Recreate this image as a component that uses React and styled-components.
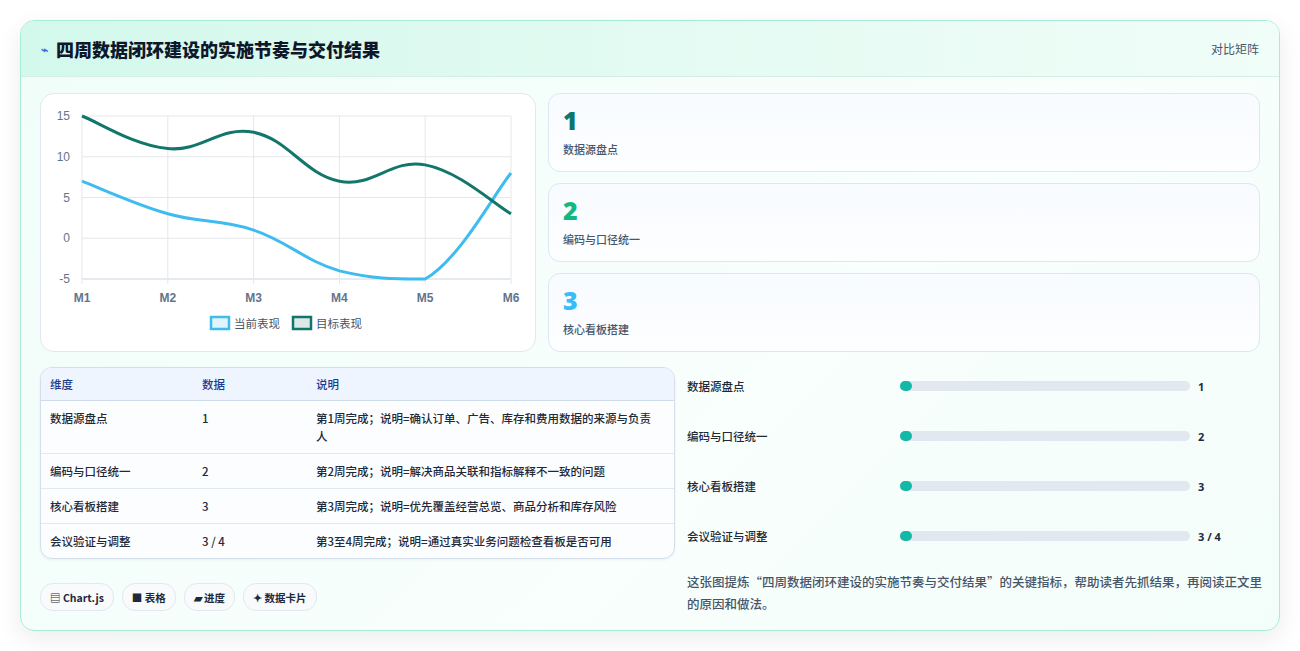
import React from "react";
import styled, { createGlobalStyle } from "styled-components";

const Global = createGlobalStyle`
  html,body{margin:0;padding:0;background:#fff;}
  body{font-family:"Noto Sans CJK SC","Noto Sans",sans-serif;}
`;

const Page = styled.div`
  padding:20px;
  height:651px;
  box-sizing:border-box;
`;
const Card = styled.div`
  height:611px;
  box-sizing:border-box;
  border:1px solid #a7ecd9;
  border-radius:14px;
  background:linear-gradient(135deg,#f0fdf8 0%,#f8fffd 60%,#f3fdf9 100%);
  box-shadow:0 8px 24px rgba(15,23,42,0.08);
  overflow:hidden;
  display:flex;
  flex-direction:column;
`;
const Header = styled.div`
  height:55px;
  flex:none;
  display:flex;
  align-items:center;
  justify-content:space-between;
  padding:0 20px;
  background:linear-gradient(90deg,#d3f8ec,#e6fbf3 60%,#f0fdf8);
  border-bottom:1px solid #d4eee8;
`;
const Title = styled.div`
  display:flex;align-items:center;gap:8px;
  font-size:18px;font-weight:900;color:#0f172a;
`;
const Icon = styled.span`font-size:12px;color:#3b6fe0;`;
const HeaderRight = styled.div`font-size:12px;color:#475569;`;
const Body = styled.div`
  padding:16px 19px 0 19px;
  display:flex;flex-direction:column;gap:15px;
`;
const TopRow = styled.div`
  display:grid;grid-template-columns:496px 1fr;column-gap:12px;
`;
const BottomRow = styled.div`
  display:grid;grid-template-columns:635px 1fr;column-gap:12px;
`;
const Panel = styled.div`
  height:259px;box-sizing:border-box;
  background:#fff;border:1px solid #e2e8f0;border-radius:14px;
`;
const Stats = styled.div`display:flex;flex-direction:column;gap:11px;`;
const Stat = styled.div`
  height:79px;box-sizing:border-box;
  border:1px solid #dbe7f3;border-radius:12px;
  background:linear-gradient(180deg,#f8fbff,#fdfeff);
  padding:11px 14px;
`;
const StatNum = styled.div`
  font-family:"Open Sans","Noto Sans",sans-serif;
  font-size:25px;font-weight:800;line-height:30px;color:${p=>p.c};
`;
const StatLabel = styled.div`font-size:11px;color:#475569;margin-top:6px;font-weight:500;`;
const LeftCol = styled.div`display:flex;flex-direction:column;`;
const Table = styled.div`
  border:1px solid #d5dfec;border-radius:12px;overflow:hidden;
  background:#fbfdff;box-shadow:0 1px 3px rgba(15,23,42,0.06);
`;
const Row = styled.div`
  display:grid;grid-template-columns:152px 114px 345px;
  padding:${p=>p.head?"7px 9px":"8px 9px"};
  font-size:11.5px;line-height:18px;
  color:${p=>p.head?"#1e3a8a":"#1f2937"};
  background:${p=>p.head?"#eef5fe":"transparent"};
  border-top:${p=>p.first?"none":"1px solid #e2e8f0"};
  font-weight:500;
  ${p=>p.head?"border-bottom:1px solid #cfdcec;":""}
`;
const Right = styled.div`display:flex;flex-direction:column;`;
const Prog = styled.div`
  display:grid;grid-template-columns:213px 290px auto;align-items:center;
  height:50px;font-size:11.5px;color:#1f2937;font-weight:500;
  margin-top:${p=>p.first?"-6px":"0"};
`;
const Track = styled.div`
  height:10px;border-radius:5px;background:#e2e8f0;position:relative;
`;
const Dot = styled.div`position:absolute;left:0;top:0;width:12px;height:10px;border-radius:5px;background:#14b8a6;`;
const Val = styled.div`padding-left:8px;font-weight:700;font-family:"Open Sans","Noto Sans",sans-serif;font-size:11px;`;
const Desc = styled.div`width:576px;font-size:12.5px;line-height:22px;color:#475569;margin-top:10px;font-weight:500;`;
const Chips = styled.div`display:flex;gap:8px;margin-top:24px;`;
const Chip = styled.div`
  height:26px;padding:0 9px;display:flex;align-items:center;gap:3px;
  border:1px solid #e2e8f0;border-radius:13px;background:#f8fafc;
  font-size:10.5px;font-weight:700;color:#1e293b;
`;

const X0=41,X1=470,Y0=22,Y1=185;
const xs=i=>X0+(X1-X0)*i/5;
const ys=v=>Y1-(v+5)*(Y1-Y0)/20;
const cl=y=>Math.max(Y0,Math.min(Y1,y));
function path(data){
  const p=data.map((v,i)=>[xs(i),ys(v)]);
  const t=0.2;
  let d=`M${p[0][0]},${p[0][1]}`;
  for(let i=0;i<p.length-1;i++){
    const a=p[i-1]||p[i],b=p[i],c=p[i+1],e=p[i+2]||c;
    const c1=[b[0]+(c[0]-a[0])*t,cl(b[1]+(c[1]-a[1])*t)];
    const c2=[c[0]-(e[0]-b[0])*t,cl(c[1]-(e[1]-b[1])*t)];
    d+=` C${c1[0]},${c1[1]} ${c2[0]},${c2[1]} ${c[0]},${c[1]}`;
  }
  return d;
}

function Chart(){
  const ticks=[15,10,5,0,-5];
  return (
    <svg width="494" height="257" style={{display:"block"}}>
      {ticks.map(t=><line key={t} x1={X0} x2={X1} y1={ys(t)} y2={ys(t)} stroke={t===-5?"#cbd5e1":"#e5e7eb"} strokeWidth="1"/>)}
      {[0,1,2,3,4,5].map(i=><line key={i} x1={xs(i)} x2={xs(i)} y1={Y0} y2={Y1+5} stroke="#e5e7eb"/>)}
      {ticks.map(t=><text key={t} x={29} y={ys(t)+4} textAnchor="end" fontSize="12" fill="#64748b" fontFamily="Liberation Sans, sans-serif">{t}</text>)}
      {[0,1,2,3,4,5].map(i=><text key={i} x={xs(i)} y={208} textAnchor="middle" fontSize="12" fontWeight="700" fill="#64748b" fontFamily="Liberation Sans, sans-serif">M{i+1}</text>)}
      <path d={path([7,3,1,-4,-5,8])} fill="none" stroke="#3fbcef" strokeWidth="3"/>
      <path d={path([15,11,13,7,9,3])} fill="none" stroke="#13766a" strokeWidth="3"/>
      <rect x="170" y="223" width="18" height="12" fill="#e0f4fd" stroke="#3fbcef" strokeWidth="2.5"/>
      <text x="193" y="234" fontSize="11.5" fill="#475569" fontFamily="Noto Sans CJK SC, sans-serif">当前表现</text>
      <rect x="252" y="223" width="18" height="12" fill="#dce9e7" stroke="#13766a" strokeWidth="2.5"/>
      <text x="275" y="234" fontSize="11.5" fill="#475569" fontFamily="Noto Sans CJK SC, sans-serif">目标表现</text>
    </svg>
  );
}

const rows=[
  ["数据源盘点","1","第1周完成；说明=确认订单、广告、库存和费用数据的来源与负责人"],
  ["编码与口径统一","2","第2周完成；说明=解决商品关联和指标解释不一致的问题"],
  ["核心看板搭建","3","第3周完成；说明=优先覆盖经营总览、商品分析和库存风险"],
  ["会议验证与调整","3 / 4","第3至4周完成；说明=通过真实业务问题检查看板是否可用"],
];

export default function App(){
  return (
    <Page>
      <Global/>
      <Card>
        <Header>
          <Title><Icon>⌁</Icon>四周数据闭环建设的实施节奏与交付结果</Title>
          <HeaderRight>对比矩阵</HeaderRight>
        </Header>
        <Body>
          <TopRow>
            <Panel><Chart/></Panel>
            <Stats>
              <Stat><StatNum c="#0f766e">1</StatNum><StatLabel>数据源盘点</StatLabel></Stat>
              <Stat><StatNum c="#10b981">2</StatNum><StatLabel>编码与口径统一</StatLabel></Stat>
              <Stat><StatNum c="#38bdf8">3</StatNum><StatLabel>核心看板搭建</StatLabel></Stat>
            </Stats>
          </TopRow>
          <BottomRow>
            <LeftCol>
              <Table>
                <Row head first><div>维度</div><div>数据</div><div>说明</div></Row>
                {rows.map((r,i)=>(
                  <Row key={i} first={i===0}><div>{r[0]}</div><div>{r[1]}</div><div>{r[2]}</div></Row>
                ))}
              </Table>
              <Chips>
                <Chip>▤ Chart.js</Chip>
                <Chip>■ 表格</Chip>
                <Chip>▰ 进度</Chip>
                <Chip>✦ 数据卡片</Chip>
              </Chips>
            </LeftCol>
            <Right>
              {rows.map((r,i)=>(
                <Prog key={i} first={i===0}><div>{r[0]}</div><Track><Dot/></Track><Val>{r[1]}</Val></Prog>
              ))}
              <Desc>这张图提炼“四周数据闭环建设的实施节奏与交付结果”的关键指标，帮助读者先抓结果，再阅读正文里的原因和做法。</Desc>
            </Right>
          </BottomRow>
        </Body>
      </Card>
    </Page>
  );
}
